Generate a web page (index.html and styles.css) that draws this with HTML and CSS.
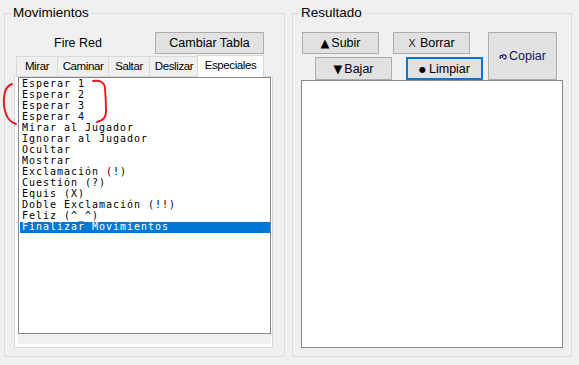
FILE: index.html
```html
<!DOCTYPE html>
<html lang="es">
<head>
	<meta charset="UTF-8">
	<title>Movimientos</title>
	<link rel="stylesheet" href="styles.css">
</head>
<body>
	<div class="window">
		<!-- lista de movimientos -->
		<fieldset class="group group-moves">
			<legend>Movimientos</legend>
			<div class="table-row">
				<span class="game">Fire Red</span>
				<button class="btn btn-table">Cambiar Tabla</button>
			</div>
			<div class="tabs">
				<div class="tab tab-mirar">Mirar</div>
				<div class="tab tab-caminar">Caminar</div>
				<div class="tab tab-saltar">Saltar</div>
				<div class="tab tab-deslizar">Deslizar</div>
				<div class="tab tab-especiales active">Especiales</div>
			</div>
			<div class="tab-panel">
				<div class="tab-page">
					<ul class="listbox">
						<li>Esperar 1</li>
						<li>Esperar 2</li>
						<li>Esperar 3</li>
						<li>Esperar 4</li>
						<li>Mirar al Jugador</li>
						<li>Ignorar al Jugador</li>
						<li>Ocultar</li>
						<li>Mostrar</li>
						<li>Exclamación (!)</li>
						<li>Cuestión (?)</li>
						<li>Equis (X)</li>
						<li>Doble Exclamación (!!)</li>
						<li>Feliz (^_^)</li>
						<li class="selected">Finalizar Movimientos</li>
					</ul>
				</div>
			</div>
		</fieldset>

		<!-- resultado -->
		<fieldset class="group group-result">
			<legend>Resultado</legend>
			<div class="actions">
				<div class="action-rows">
					<div class="action-row">
						<button class="btn btn-small"><span class="glyph">▲</span>Subir</button>
						<button class="btn btn-small"><span class="glyph-x">X</span>Borrar</button>
					</div>
					<div class="action-row action-row-low">
						<button class="btn btn-small"><span class="glyph">▼</span>Bajar</button>
						<button class="btn btn-small btn-focus"><span class="glyph-dot">●</span>Limpiar</button>
					</div>
				</div>
				<button class="btn btn-copy">
					<svg class="copy-icon" width="8" height="6" viewBox="0 0 8 6">
						<path d="M1.6 4.6 C0.4 3.2 1.4 1 3 1.5 C4.4 2 3.6 4 2.6 3.2 M3 1.5 C5 0.4 7.6 1 7.1 3.4 C6.8 5 5 5.3 4.4 4.4" fill="none" stroke="#1c1c80" stroke-width="1.2"/>
					</svg>Copiar
				</button>
			</div>
			<div class="result-box"></div>
		</fieldset>

		<!-- marcas en rojo -->
		<svg class="marks" width="120" height="130" viewBox="0 0 120 130">
			<path d="M12 84 Q6 86 4.5 94 Q2.5 104 6 114 Q9 122 16 124" fill="none" stroke="#e8141a" stroke-width="1.9" stroke-linecap="round"/>
			<path d="M93 81 Q104 79.5 105 88 Q106 100 106 112 Q106 120 97 122" fill="none" stroke="#e8141a" stroke-width="1.9" stroke-linecap="round"/>
		</svg>
	</div>
</body>
</html>
```

FILE: styles.css
```css
*{
	box-sizing:border-box;
}
body{
	margin:0;
	background:#f0f0f0;
	font-family:"Liberation Sans", Arial, sans-serif;
	color:#000;
}
.window{
	position:relative;
	display:flex;
	gap:7px;
	padding:5px 0 0 4px;
}
.group{
	margin:0;
	padding:0;
	border:1px solid #dcdcdc;
	height:352px;
	min-width:0;
}
.group legend{
	margin-left:6px;
	padding:0 2px;
	font-size:13.5px;
	line-height:16px;
}
.group-moves{
	width:281px;
}
.group-result{
	width:280px;
}
.btn{
	padding:0;
	margin:0;
	background:#e1e1e1;
	border:1px solid #adadad;
	font-family:"Liberation Sans", Arial, sans-serif;
	font-size:12.5px;
	color:#000;
}

/* izquierda */
.table-row{
	display:flex;
	align-items:center;
	margin-top:11px;
}
.game{
	width:146px;
	margin-right:4px;
	text-align:center;
	font-size:12.5px;
}
.btn-table{
	width:109px;
	height:22px;
}
.tabs{
	display:flex;
	align-items:flex-end;
	height:21px;
	margin:1px 0 0 11px;
}
.tab{
	height:20px;
	margin-left:-1px;
	border:1px solid #d9d9d9;
	border-bottom:0;
	background:#f0f0f0;
	text-align:center;
	font-size:11.5px;
	letter-spacing:-0.4px;
	line-height:19px;
}
.tab-mirar{
	width:42px;
	margin-left:0;
}
.tab-caminar{
	width:52px;
}
.tab-saltar{
	width:42px;
}
.tab-deslizar{
	width:50px;
}
.tab-especiales{
	width:67px;
}
.tab.active{
	position:relative;
	z-index:1;
	height:22px;
	margin-left:-2px;
	margin-bottom:-1px;
	background:#fff;
	line-height:18px;
}
.tab-panel{
	width:259px;
	height:272px;
	margin-left:9px;
	border:1px solid #d9d9d9;
	background:#fff;
	padding:0 1px 3px 3px;
}
.tab-page{
	height:100%;
	background:#f0f0f0;
}
.listbox{
	list-style:none;
	margin:0;
	height:257px;
	padding:1px 0 0 1px;
	border:1px solid #828790;
	background:#fff;
	font-family:"DejaVu Sans Mono", "Liberation Mono", monospace;
	font-size:10px;
	letter-spacing:0.98px;
	line-height:9px;
}
.listbox li{
	height:11px;
	padding-left:2px;
	white-space:pre;
}
.listbox li.selected{
	background:#0078d7;
	color:#fff;
	line-height:10px;
}

/* derecha */
.actions{
	display:flex;
	margin:11px 0 0 9px;
}
.action-rows{
	display:flex;
	flex-direction:column;
	gap:3px;
}
.action-row{
	display:flex;
	gap:14px;
}
.action-row-low{
	margin-left:13px;
}
.btn-small{
	width:77px;
	height:22px;
}
.action-row-low .btn-small{
	height:23px;
}
.btn-focus{
	border:2px solid #0078d7;
}
.glyph{
	font-family:"DejaVu Sans", sans-serif;
	font-size:11.5px;
	margin-right:2px;
}
.glyph-x{
	font-family:"DejaVu Sans", sans-serif;
	font-size:11px;
	color:#333;
	margin-right:4px;
}
.glyph-dot{
	font-family:"DejaVu Sans", sans-serif;
	font-size:8px;
	margin-right:3px;
	vertical-align:1px;
}
.btn-copy{
	width:69px;
	height:48px;
	margin-left:5px;
	color:#141460;
}
.copy-icon{
	margin-right:2px;
}
.result-box{
	width:262px;
	height:268px;
	margin-left:8px;
	border:1px solid #828790;
	background:#fff;
}
.marks{
	position:absolute;
	left:0;
	top:0;
	pointer-events:none;
}
```
